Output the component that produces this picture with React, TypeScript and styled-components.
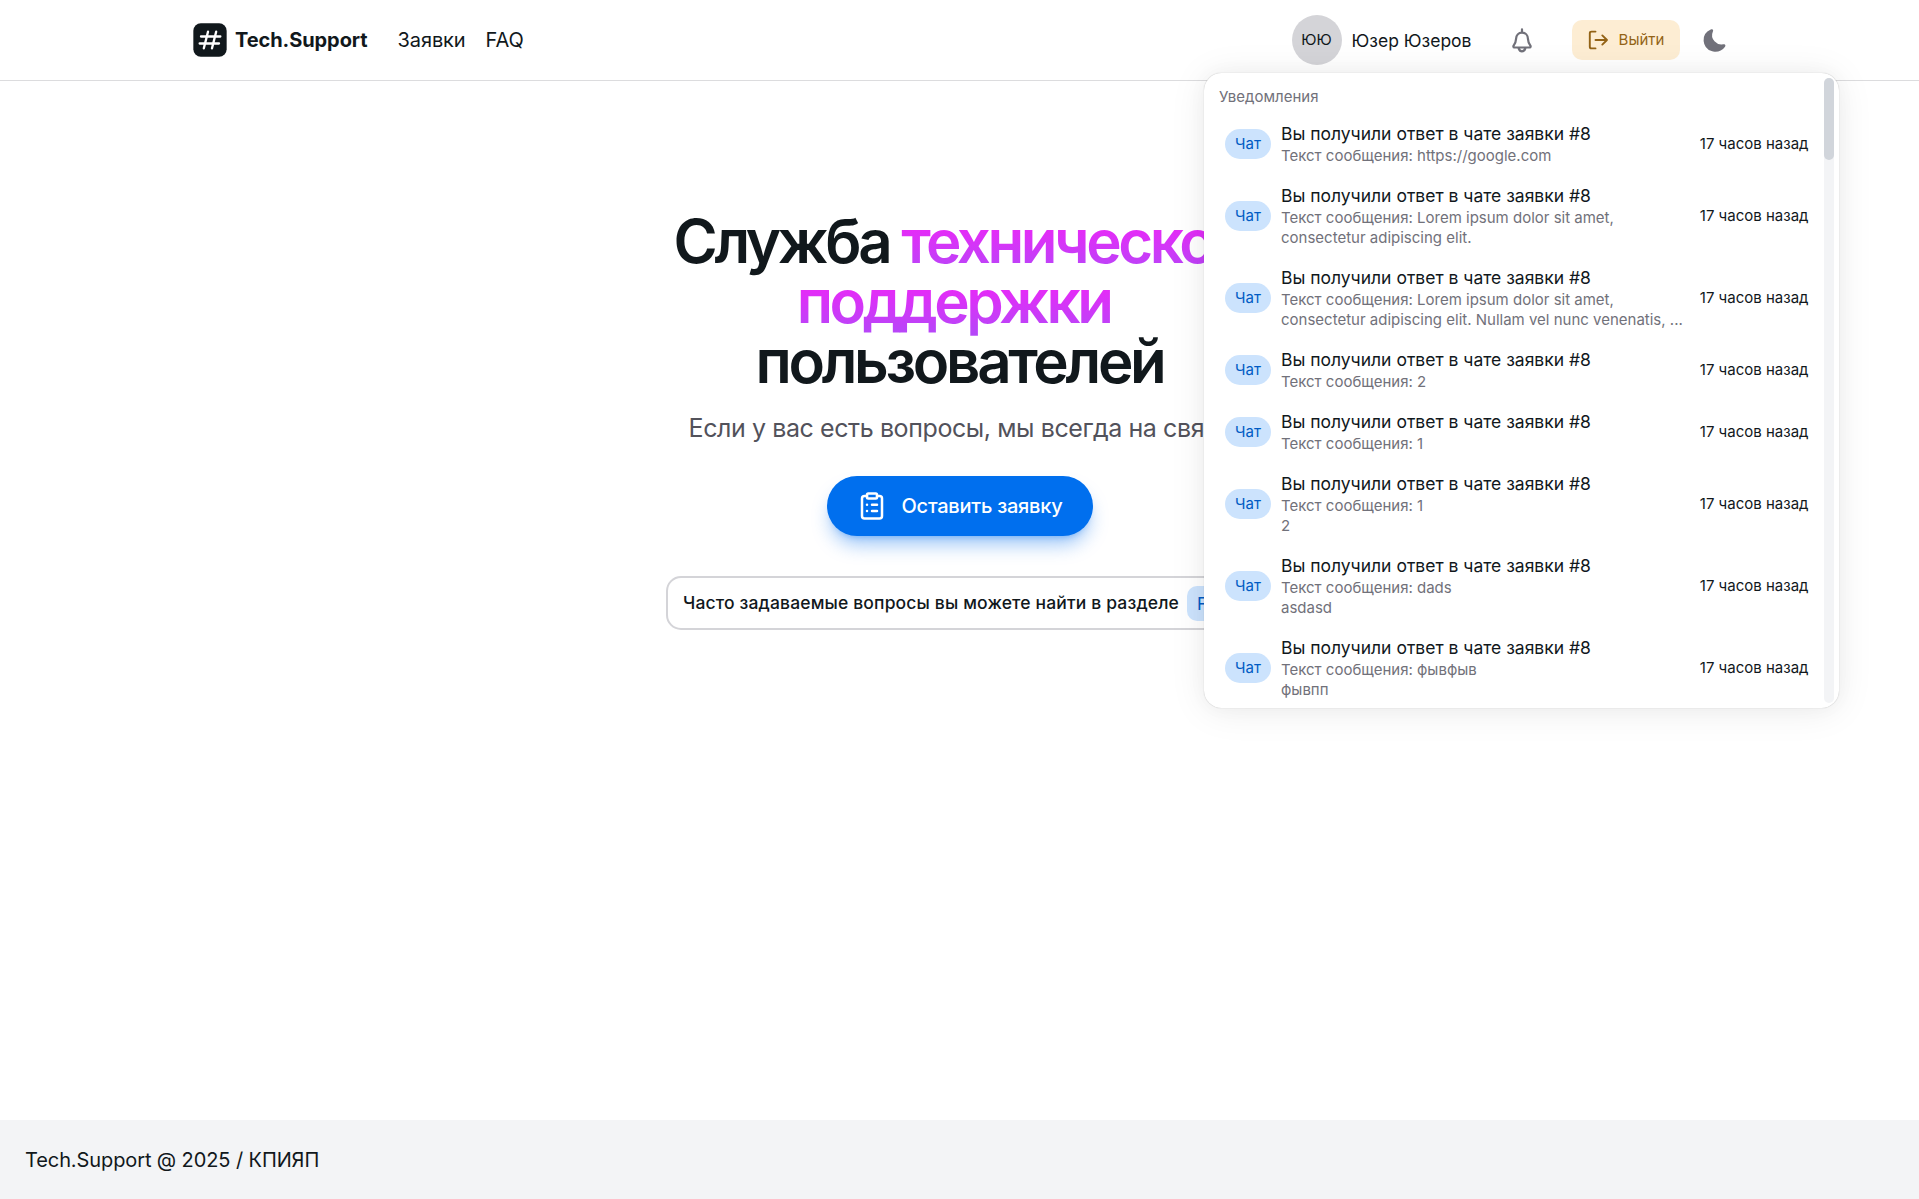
import React from "react";
import styled, { createGlobalStyle } from "styled-components";
import { ClipboardList } from "lucide-react";

const Global = createGlobalStyle`
  *, *::before, *::after { box-sizing: border-box; }
  html, body { margin: 0; height: 100%; }
  body {
    font-family: Inter, "Noto Sans", sans-serif;
    font-size: 20px;
    line-height: 30px;
    color: #11181c;
    background: #fff;
    overflow: hidden;
  }
  p, h1 { margin: 0; }
`;

const Page = styled.div`
  position: relative;
  display: flex;
  flex-direction: column;
  height: 1199px;
`;

const Header = styled.header`
  display: flex;
  justify-content: center;
  border-bottom: 1px solid #dcdcde;
`;

const HeaderInner = styled.div`
  display: flex;
  align-items: center;
  justify-content: space-between;
  width: 1600px;
  height: 80px;
  padding: 0 30px;
`;

const Group = styled.div<{ $gap: number }>`
  display: flex;
  align-items: center;
  gap: ${(p) => p.$gap}px;
`;

const Brand = styled.a`
  display: flex;
  align-items: center;
  gap: 5.5px;
  margin-right: 10px;
  font-weight: 700;
  letter-spacing: -0.08px;
`;

const NavLink = styled.a`
  font-size: 20px;
  letter-spacing: -0.1px;
`;

const User = styled.div`
  display: flex;
  align-items: center;
  gap: 10px;
  font-size: 17.5px;
`;

const UserName = styled.span`
  padding-top: 2px;
`;

const Avatar = styled.span`
  display: flex;
  align-items: center;
  justify-content: center;
  width: 50px;
  height: 50px;
  border-radius: 50%;
  background: #d4d4d8;
  font-size: 15px;
`;

const IconButton = styled.button<{ $size: number; $color: string; $margin?: string }>`
  display: flex;
  align-items: center;
  justify-content: center;
  width: ${(p) => p.$size}px;
  height: ${(p) => p.$size}px;
  margin: ${(p) => p.$margin ?? "0"};
  padding: 0;
  border: 0;
  background: none;
  color: ${(p) => p.$color};
`;

const LogoutButton = styled.button`
  display: flex;
  align-items: center;
  justify-content: center;
  gap: 10px;
  width: 108px;
  height: 40px;
  padding: 0 0 1px;
  border: 0;
  border-radius: 10px;
  background: #fdedd3;
  color: #936316;
  font: 400 15px Inter, sans-serif;
`;

const Main = styled.main`
  flex: 1;
  display: flex;
  flex-direction: column;
  align-items: center;
  padding-top: 130px;
`;

const Title = styled.h1`
  width: 720px;
  font-size: 60px;
  line-height: 60px;
  font-weight: 600;
  letter-spacing: -3.3px;
  text-align: center;
`;

const Gradient = styled.span`
  background: linear-gradient(to bottom, #ff1cf7, #b249f8);
  background-clip: text;
  -webkit-background-clip: text;
  color: transparent;
  letter-spacing: -3.45px;
`;

const Subtitle = styled.p`
  margin-top: 20px;
  font-size: 25px;
  line-height: 35px;
  letter-spacing: -0.41px;
  color: #52525b;
`;

const CallButton = styled.button`
  display: flex;
  align-items: center;
  justify-content: center;
  gap: 15px;
  width: 266px;
  height: 60px;
  margin-top: 30px;
  padding: 0;
  border: 0;
  border-radius: 30px;
  background: #006fee;
  box-shadow: 0 12px 19px -4px rgba(0, 111, 238, 0.4), 0 5px 7px -5px rgba(0, 111, 238, 0.4);
  color: #fff;
  font: 500 20px Inter, sans-serif;
  letter-spacing: -0.23px;
`;

const Snippet = styled.div`
  display: flex;
  align-items: center;
  gap: 8px;
  width: 587px;
  height: 54px;
  margin-top: 40px;
  padding: 0 15px;
  border: 2px solid #d4d4d8;
  border-radius: 15px;
  font-size: 17.5px;
  font-weight: 500;
  letter-spacing: 0.15px;
  white-space: nowrap;
`;

const Code = styled.code`
  display: flex;
  align-items: center;
  height: 35px;
  padding: 0 10px;
  border-radius: 10px;
  background: #cce3fd;
  color: #005bc4;
  font: 400 17.5px Inter, sans-serif;
`;

const Footer = styled.footer`
  display: flex;
  align-items: center;
  height: 79px;
  padding: 0 25px;
  background: #f3f4f6;
  letter-spacing: -0.1px;
`;

const Popover = styled.section`
  position: absolute;
  left: 1204px;
  top: 73px;
  display: flex;
  width: 635px;
  height: 635px;
  padding: 5px;
  border-radius: 17.5px;
  background: #fff;
  box-shadow: 0 0 19px rgba(0, 0, 0, 0.03), 0 2.5px 37px rgba(0, 0, 0, 0.08), 0 0 1px rgba(0, 0, 0, 0.3);
`;

const PopoverBody = styled.div`
  flex: 1;
  min-width: 0;
  height: 625px;
  overflow: hidden;
  padding: 9px 5px 0 10px;
`;

const PopoverHeading = styled.div`
  font-size: 15px;
  line-height: 20px;
  margin-bottom: 7px;
  color: #71717a;
`;

const Row = styled.div`
  display: flex;
  align-items: center;
  gap: 10px;
  margin-bottom: 2px;
  padding: 7.5px 10.5px 7.5px 6px;
`;

const Chip = styled.span`
  flex: none;
  width: 46px;
  height: 30px;
  border-radius: 15px;
  background: #cce3fd;
  color: #005bc4;
  font-size: 15px;
  line-height: 30px;
  text-align: center;
`;

const RowText = styled.div`
  flex: 1;
  min-width: 0;
`;

const RowTitle = styled.p`
  padding-bottom: 1px;
  font-size: 17.5px;
  line-height: 23px;
`;

const RowDescription = styled.p`
  padding-bottom: 1px;
  font-size: 15px;
  line-height: 20px;
  color: #71717a;
  white-space: pre;
`;

const Time = styled.span`
  flex: none;
  font-size: 15px;
  line-height: 20px;
`;

const Track = styled.div`
  width: 10px;
  height: 625px;
  border-radius: 5px;
  background: #f3f4f6;
`;

const Thumb = styled.div`
  height: 82px;
  border-radius: 5px;
  background: #d1d5db;
`;

const messages = [
  "https://google.com",
  "Lorem ipsum dolor sit amet,\nconsectetur adipiscing elit.",
  "Lorem ipsum dolor sit amet,\nconsectetur adipiscing elit. Nullam vel nunc venenatis, ...",
  "2",
  "1",
  "1\n2",
  "dads\nasdasd",
  "фывфыв\nфывпп",
];

const Logo = () => (
  <svg width="40" height="40" viewBox="0 0 24 24">
    <rect x="2" y="2" width="20" height="20" rx="4.5" fill="#11181c" />
    <path d="M10.8 7l-2.500 10M15.700 7l-2.500 10M6.600 9.900h11.600M5.800 14.100h11.600" fill="none" stroke="#fff" strokeWidth="1.400" strokeLinecap="round" />
  </svg>
);

const Bell = () => (
  <svg width="20" height="25" viewBox="0 0 20 25" fill="none" stroke="currentColor" strokeWidth="2.2" strokeLinejoin="round" strokeLinecap="round">
    <path d="M10 1.300V4.500M10 4.700C6.300 4.700 4.300 7.500 4.100 10.500C3.900 13.300 3.900 15 1.700 17.500C1.100 18.300 1.300 19.500 2.200 19.500H17.800C18.700 19.500 18.900 18.300 18.300 17.500C16.100 15 16.100 13.300 15.900 10.500C15.700 7.500 13.700 4.700 10 4.700ZM6.700 20.500C7.500 22.700 8.600 23.300 10 23.300S12.500 22.700 13.300 20.500" />
  </svg>
);

const Exit = () => (
  <svg width="22" height="22" viewBox="0 0 22 22" fill="none" stroke="currentColor" strokeWidth="1.9" strokeLinecap="round" strokeLinejoin="round">
    <path d="M8.500 2.600H4.500Q2.800 2.600 2.800 4.300v13.400q0 1.700 1.700 1.700H8.500M8.500 11H20M15.300 6.400L20 11l-4.700 4.600" />
  </svg>
);

const Moon = () => (
  <svg width="27" height="27" viewBox="0 0 24 24" fill="currentColor">
    <path d="M21.530 15.930c-.16-.27-.61-.69-1.730-.49a8.460 8.460 0 01-1.880.13 8.409 8.409 0 01-5.910-2.820 8.068 8.068 0 01-1.440-8.660c.44-1.010.13-1.540-.09-1.760s-.77-.55-1.830-.11a10.318 10.318 0 00-6.320 10.210 10.475 10.475 0 007.040 8.990 10 10 0 002.890.55c.16.010.32.020.48.020a10.500 10.500 0 008.470-4.270c.67-.93.49-1.519.32-1.790z" />
  </svg>
);

export default function App() {
  return (
    <Page>
      <Global />
      <Header>
        <HeaderInner>
          <Group $gap={20}>
            <Brand><Logo />Tech.Support</Brand>
            <NavLink>Заявки</NavLink>
            <NavLink>FAQ</NavLink>
          </Group>
          <Group $gap={25}>
            <User><Avatar>ЮЮ</Avatar><UserName>Юзер Юзеров</UserName></User>
            <IconButton $size={50} $color="#71717a"><Bell /></IconButton>
            <LogoutButton><Exit />Выйти</LogoutButton>
            <IconButton $size={27} $color="#71717a" $margin="0 2px 0 -4px"><Moon /></IconButton>
          </Group>
        </HeaderInner>
      </Header>
      <Main>
        <Title>Служба <Gradient>технической поддержки</Gradient>{"\u00a0 "}пользователей</Title>
        <Subtitle>Если у вас есть вопросы, мы всегда на связи</Subtitle>
        <CallButton><ClipboardList size={30} strokeWidth={2} />Оставить заявку</CallButton>
        <Snippet>Часто задаваемые вопросы вы можете найти в разделе <Code>FAQ</Code></Snippet>
      </Main>
      <Footer>Tech.Support @ 2025 / КПИЯП</Footer>
      <Popover>
        <PopoverBody>
          <PopoverHeading>Уведомления</PopoverHeading>
          {messages.map((m, i) => (
            <Row key={i}>
              <Chip>Чат</Chip>
              <RowText>
                <RowTitle>Вы получили ответ в чате заявки #8</RowTitle>
                <RowDescription>Текст сообщения: {m}</RowDescription>
              </RowText>
              <Time>17 часов назад</Time>
            </Row>
          ))}
        </PopoverBody>
        <Track><Thumb /></Track>
      </Popover>
    </Page>
  );
}
